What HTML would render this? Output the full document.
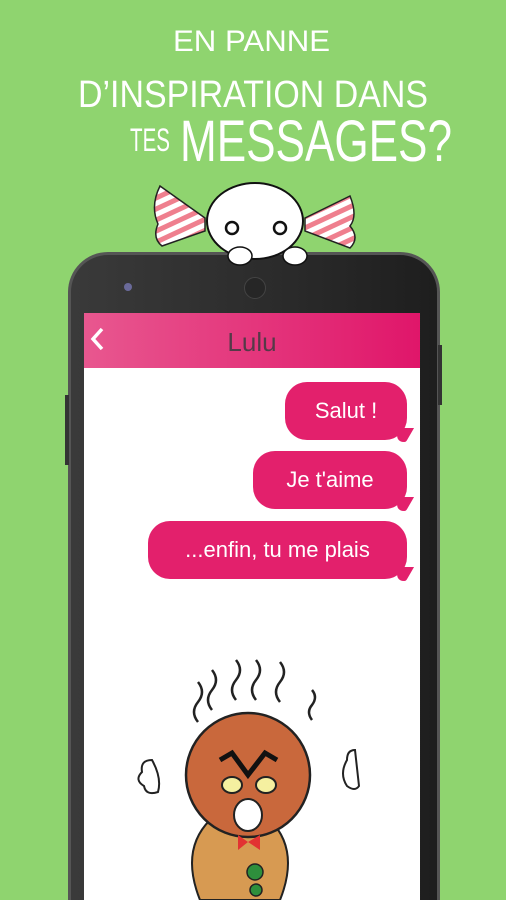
<!DOCTYPE html>
<html><head><meta charset="utf-8"><style>
html,body{margin:0;padding:0;width:506px;height:900px;overflow:hidden}
body{background:#8fd46f;position:relative;font-family:"Liberation Sans",sans-serif}
.abs{position:absolute}
.bub{position:absolute;background:#e3206c;color:#fff;font-size:22px;border-radius:22px;height:58px;line-height:58px;text-align:center}
.bub:after{content:"";position:absolute;right:-3px;bottom:-2px;width:14px;height:14px;background:#e3206c;border-radius:0 0 2px 14px;transform:skewX(-30deg)}
</style></head><body>
<svg class="abs" style="left:0;top:0" width="506" height="175">
<g fill="#fff" font-family="Liberation Sans Narrow, Liberation Sans, sans-serif">
<text x="173" y="51" font-size="30" textLength="157" lengthAdjust="spacingAndGlyphs">EN PANNE</text>
<text x="78" y="107" font-size="38" textLength="350" lengthAdjust="spacingAndGlyphs">D’INSPIRATION DANS</text>
<text x="130" y="151" font-size="32" textLength="40" lengthAdjust="spacingAndGlyphs">TES</text>
<text x="180" y="161" font-size="58" textLength="272" lengthAdjust="spacingAndGlyphs">MESSAGES?</text>
</g></svg>
<div class="abs" style="left:68px;top:252px;width:372px;height:648px;background:linear-gradient(90deg,#3a3a3a,#2a2a2a 60%,#1e1e1e);border-radius:40px 40px 0 0;border:3px solid #555;border-bottom:none;box-sizing:border-box"></div>
<div class="abs" style="left:438px;top:345px;width:4px;height:60px;background:#333"></div>
<div class="abs" style="left:65px;top:395px;width:4px;height:70px;background:#333"></div>
<div class="abs" style="left:124px;top:283px;width:8px;height:8px;border-radius:50%;background:#6a6a9a"></div>
<div class="abs" style="left:244px;top:277px;width:20px;height:20px;border-radius:50%;background:#262626;border:1px solid #444"></div>
<svg class="abs" style="left:150px;top:176px" width="210" height="90">
<defs><pattern id="st" width="10" height="10" patternUnits="userSpaceOnUse" patternTransform="rotate(-25)"><rect width="10" height="10" fill="#fff"/><rect width="10" height="5" fill="#ef7f8e"/></pattern></defs>
<path d="M55 42 L10 10 Q0 30 8 48 Q2 62 12 70 L55 55Z" fill="url(#st)" stroke="#222" stroke-width="1.5"/>
<path d="M155 42 L200 20 Q208 40 200 50 Q210 62 200 72 L155 55Z" fill="url(#st)" stroke="#222" stroke-width="1.5"/>
<ellipse cx="105" cy="45" rx="48" ry="38" fill="#fff" stroke="#111" stroke-width="2"/>
<circle cx="82" cy="52" r="6" fill="#fff" stroke="#111" stroke-width="2.5"/>
<circle cx="130" cy="52" r="6" fill="#fff" stroke="#111" stroke-width="2.5"/>
<ellipse cx="90" cy="80" rx="12" ry="9" fill="#fff" stroke="#111" stroke-width="1.5"/>
<ellipse cx="145" cy="80" rx="12" ry="9" fill="#fff" stroke="#111" stroke-width="1.5"/>
</svg>
<div class="abs" style="left:84px;top:313px;width:336px;height:587px;background:#fff"></div>
<div class="abs" style="left:84px;top:313px;width:336px;height:55px;background:linear-gradient(90deg,#e8578f,#e0166a)"></div>
<div class="abs" style="left:84px;top:313px;width:336px;height:58px;line-height:58px;text-align:center;color:#553a48;font-size:26px">Lulu</div>
<svg class="abs" style="left:88px;top:326px" width="18" height="26"><path d="M14 3 L5 13 L14 23" stroke="#fff" stroke-width="3.5" fill="none"/></svg>
<div class="bub" style="left:285px;top:382px;width:122px">Salut !</div>
<div class="bub" style="left:253px;top:451px;width:154px">Je t'aime</div>
<div class="bub" style="left:148px;top:521px;width:259px">...enfin, tu me plais</div>
<svg class="abs" style="left:120px;top:650px" width="240" height="250">
<g fill="none" stroke="#222" stroke-width="2.5">
<path d="M78 72 q-8 -10 0 -20 q8 -10 0 -20"/><path d="M92 60 q-8 -10 0 -20 q8 -10 0 -20"/><path d="M116 50 q-8 -10 0 -20 q8 -10 0 -20"/><path d="M136 50 q-8 -10 0 -20 q8 -10 0 -20"/><path d="M160 52 q-8 -10 0 -20 q8 -10 0 -20"/><path d="M192 70 q-6 -8 0 -15 q6 -8 0 -15"/>
</g>
<path d="M90 170 Q60 200 80 250 L160 250 Q180 200 150 170Z" fill="#d79a52" stroke="#222" stroke-width="2"/>
<circle cx="128" cy="125" r="62" fill="#c9683c" stroke="#222" stroke-width="2.5"/>
<path d="M100 110 L112 103 L128 125 L145 103 L157 110" fill="none" stroke="#111" stroke-width="5"/>
<ellipse cx="112" cy="135" rx="10" ry="8" fill="#f5f0a0" stroke="#222" stroke-width="2"/>
<ellipse cx="146" cy="135" rx="10" ry="8" fill="#f5f0a0" stroke="#222" stroke-width="2"/>
<ellipse cx="128" cy="165" rx="14" ry="16" fill="#fff" stroke="#222" stroke-width="2"/>
<path d="M118 185 L118 200 L128 192 L140 200 L140 185 L128 192Z" fill="#e23232"/>
<circle cx="135" cy="222" r="8" fill="#2e8f3c" stroke="#222" stroke-width="1.5"/>
<circle cx="136" cy="240" r="6" fill="#2e8f3c" stroke="#222" stroke-width="1.5"/>
<g fill="#fff" stroke="#222" stroke-width="2"><path d="M32 110 q-12 0 -10 12 q-8 8 2 14 q2 10 14 6 q4 -14 -6 -32z"/><path d="M235 100 q-8 0 -8 10 q-8 14 0 26 q8 6 12 0z"/></g>
</svg>
</body></html>
